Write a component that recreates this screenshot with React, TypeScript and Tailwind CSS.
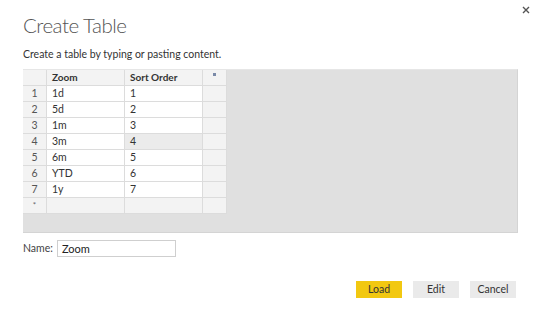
import React from 'react';

const rows = [
  ['1', '1d', '1'],
  ['2', '5d', '2'],
  ['3', '1m', '3'],
  ['4', '3m', '4'],
  ['5', '6m', '5'],
  ['6', 'YTD', '6'],
  ['7', '1y', '7'],
];

const font = { fontFamily: 'Lato, "Open Sans", sans-serif' };

const App: React.FC = () => {
  return (
    <div className="relative w-[540px] h-[321px] bg-white text-[#333] overflow-hidden" style={font}>
      {/* close */}
      <button className="absolute top-[4px] right-[8px] w-[12px] h-[12px] flex items-center justify-center text-[#555]">
        <svg width="8" height="8" viewBox="0 0 8 8">
          <path d="M1 1 L7 7 M7 1 L1 7" stroke="#555" strokeWidth="1.4" />
        </svg>
      </button>

      <div className="px-[23px] pt-[12px] flex flex-col">
        <h1 className="text-[20.5px] leading-[26px] font-light text-[#555] tracking-[-0.5px]">Create Table</h1>
        <p className="mt-[9px] text-[10.5px] leading-[14px] text-[#333]">Create a table by typing or pasting content.</p>

        {/* grid area */}
        <div className="mt-[8px] w-[495px] h-[164px] bg-[#e0e0e0] border border-[#d4d4d4] border-l-0 border-t-[#e6e6e6]">
          <div className="flex flex-col w-[204px] text-[10.5px]">
            <div className="flex h-[16px] bg-[#f3f3f3] border-b border-[#dcdcdc] text-[10px]">
              <div className="w-[24px] border-r border-[#dcdcdc]" />
              <div className="w-[78px] border-r border-[#dcdcdc] pl-[5px] font-bold leading-[15px]">Zoom</div>
              <div className="w-[78px] border-r border-[#dcdcdc] pl-[5px] font-bold leading-[15px]">Sort Order</div>
              <div className="w-[24px] border-r border-[#dcdcdc] flex justify-center pt-[3px]">
                <span className="w-[3px] h-[3px] bg-[#7a8aa8]" />
              </div>
            </div>
            {rows.map(([n, z, s]) => (
              <div key={n} className="flex h-[16px] border-b border-[#dcdcdc] leading-[15px]">
                <div className="w-[24px] bg-[#f3f3f3] border-r border-[#dcdcdc] text-center text-[#555]">{n}</div>
                <div className="w-[78px] bg-white border-r border-[#dcdcdc] pl-[5px]">{z}</div>
                <div className={`w-[78px] border-r border-[#dcdcdc] pl-[5px] ${n === '4' ? 'bg-[#ebebeb]' : 'bg-white'}`}>{s}</div>
                <div className="w-[24px] bg-[#f3f3f3] border-r border-[#dcdcdc]" />
              </div>
            ))}
            <div className="flex h-[16px] bg-[#f3f3f3] border-b border-[#dcdcdc] leading-[15px]">
              <div className="w-[24px] border-r border-[#dcdcdc] text-center text-[#666] text-[8px]">*</div>
              <div className="w-[78px] border-r border-[#dcdcdc]" />
              <div className="w-[78px] border-r border-[#dcdcdc]" />
              <div className="w-[24px] border-r border-[#dcdcdc]" />
            </div>
          </div>
        </div>

        {/* name */}
        <div className="mt-[7px] flex items-center gap-[4px]">
          <span className="text-[10.5px] text-[#444]">Name:</span>
          <div className="w-[119px] h-[17px] border border-[#cfcfcf] bg-white pl-[4px] text-[11px] leading-[15px] text-[#222]">Zoom</div>
        </div>

        {/* buttons */}
        <div className="mt-[24px] flex justify-end gap-[11px] pr-[1px] text-[10.5px]">
          <button className="w-[46px] h-[17px] bg-[#f2c811] text-[#333]">Load</button>
          <button className="w-[46px] h-[17px] bg-[#eaeaea] text-[#333]">Edit</button>
          <button className="w-[46px] h-[17px] bg-[#eaeaea] text-[#333]">Cancel</button>
        </div>
      </div>
    </div>
  );
};

export default App;
